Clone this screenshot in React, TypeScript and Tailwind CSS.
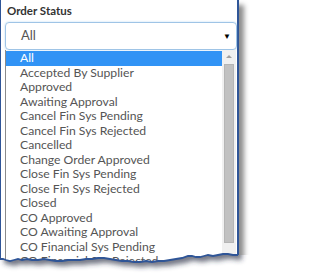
import React from "react";

const items = [
  "All",
  "Accepted By Supplier",
  "Approved",
  "Awaiting Approval",
  "Cancel Fin Sys Pending",
  "Cancel Fin Sys Rejected",
  "Cancelled",
  "Change Order Approved",
  "Close Fin Sys Pending",
  "Close Fin Sys Rejected",
  "Closed",
  "CO Approved",
  "CO Awaiting Approval",
  "CO Financial Sys Pending",
  "CO Financial Sys Rejected",
];

const torn: [number, number][] = [
  [0, 259], [3, 259], [6, 260], [10, 261], [14, 260], [18, 259], [22, 260], [27, 259], [32, 260],
  [38, 260], [44, 259], [50, 260], [56, 261], [62, 261], [68, 260], [74, 260], [80, 260],
  [86, 259], [92, 259], [98, 258], [104, 258], [110, 259], [116, 260], [122, 261], [128, 261],
  [134, 262], [140, 262], [146, 261], [152, 262], [158, 261], [164, 261], [170, 260], [176, 259],
  [182, 258], [188, 256], [192, 256], [196, 257], [200, 257], [204, 256], [208, 255], [213, 256],
  [218, 255], [223, 254], [228, 254], [233, 255], [238, 255],
];

const linePts = torn.map(([x, y]) => `${x},${y}`).join(" ");
const below = `${linePts} 254,255 254,276 0,276`;
const above = `${linePts} 238,220 0,220`;

export default function App() {
  return (
    <div className="relative w-[254px] h-[276px] bg-white overflow-hidden font-['Lato','Open_Sans',sans-serif]">
      <div className="w-[239px] h-[276px] bg-white border-l border-r-2 border-[#2f5597] shadow-[5px_5px_5px_rgba(0,0,0,0.45)] pt-[3px] pl-[4px] flex flex-col">
        <div className="pl-[2px] text-[11.5px] leading-[16px] font-bold text-[#333]">Order Status</div>
        <div className="mt-[3px] h-[28px] rounded-[4px] border border-[#9fc4e6] shadow-[0_0_2px_rgba(102,175,233,0.5)] flex items-center pl-[15px] pr-[5px] text-[13px] text-[#555]">
          <span>All</span>
          <span className="ml-auto text-[8px] text-black leading-none">▼</span>
        </div>
        <div className="flex flex-1 border-l border-[#8a8a8a]">
          <div className="flex-1 pt-[1px] text-[12.2px] leading-[14.5px] text-[#555]">
            {items.map((it, i) => (
              <div
                key={it}
                className={
                  i === 0
                    ? "h-[14.5px] pl-[14px] bg-[#3193f5] text-white whitespace-nowrap"
                    : "h-[14.5px] pl-[14px] whitespace-nowrap"
                }
              >
                {it}
              </div>
            ))}
          </div>
          <div className="w-[14px] mr-[1px] bg-[#f0f0f0] flex flex-col items-center pt-[5px]">
            <div className="w-0 h-0 border-l-[3px] border-r-[3px] border-b-[3px] border-l-transparent border-r-transparent border-b-[#a0a0a0]" />
            <div className="mt-[6px] w-[10px] h-[179px] bg-[#c1c1c1] border border-[#b5b5b5]" />
          </div>
        </div>
      </div>
      <svg className="absolute top-0 left-0 pointer-events-none" width="254" height="276" viewBox="0 0 254 276">
        <defs>
          <clipPath id="belowClip">
            <polygon points={below} />
          </clipPath>
          <filter id="blur" x="-10%" y="-50%" width="120%" height="200%">
            <feGaussianBlur stdDeviation="2.5" />
          </filter>
        </defs>
        <polygon points={below} fill="#ffffff" />
        <g clipPath="url(#belowClip)">
          <polygon points={above} transform="translate(4,5)" fill="rgba(40,50,70,0.65)" filter="url(#blur)" />
        </g>
        <polyline points={linePts} fill="none" stroke="#2f5597" strokeWidth="1.8" />
      </svg>
    </div>
  );
}
